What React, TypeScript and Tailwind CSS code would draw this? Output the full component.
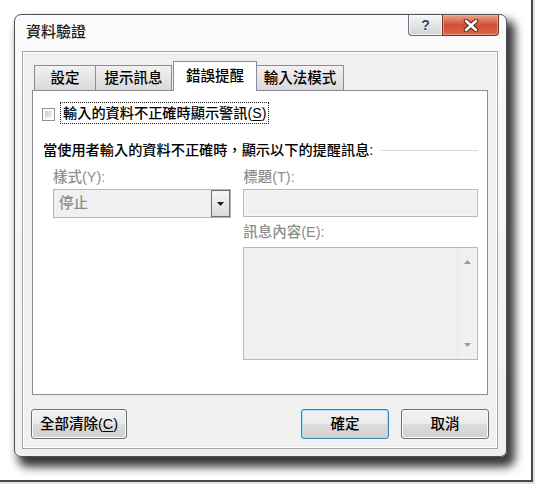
import React from 'react';

const font = "font-['Liberation_Sans','Noto_Sans_CJK_TC',sans-serif]";

function TitleButtons() {
  return (
    <div className="flex h-[21px]">
      <div className="w-[35px] h-full rounded-bl-[4px] border border-t-0 border-[#6c717b] bg-gradient-to-b from-[#f5f6f7] via-[#e3e5e8] to-[#cfd3d9] shadow-[inset_0_0_0_1px_rgba(255,255,255,0.7)] flex items-center justify-center">
        <span className="text-[14px] leading-none font-bold text-[#3d4350] [text-shadow:0_0_2px_#fff]">?</span>
      </div>
      <div className="-ml-px w-[57px] h-full rounded-br-[4px] border border-t-0 border-[#7b2f22] bg-gradient-to-b from-[#e9a38e] via-[#cf4f32] to-[#d9694b] shadow-[inset_0_0_0_1px_rgba(255,200,180,0.5)] flex items-center justify-center">
        <svg width="16" height="13" viewBox="0 0 16 13">
          <path d="M3 2 L13 11 M13 2 L3 11" stroke="#5a1d12" strokeWidth="4.5" strokeLinecap="round" />
          <path d="M3 2 L13 11 M13 2 L3 11" stroke="#ffffff" strokeWidth="2.6" strokeLinecap="round" />
        </svg>
      </div>
    </div>
  );
}

function Tab({ label, width, active, first }: { label: string; width: number; active?: boolean; first?: boolean }) {
  if (active) {
    return (
      <div
        className="relative z-10 -mb-px h-[30px] border border-b-0 border-[#898c95] bg-white flex items-center justify-center text-[14.5px] leading-none text-black"
        style={{ width }}
      >
        {label}
      </div>
    );
  }
  return (
    <div
      className={`h-[25px] border border-b-0 border-[#898c95] bg-gradient-to-b from-[#f2f2f2] to-[#d9d9d9] flex items-center justify-center text-[14.5px] leading-none text-black ${first ? '' : '-ml-px'}`}
      style={{ width }}
    >
      {label}
    </div>
  );
}

function WinButton({ children, width, primary }: { children: React.ReactNode; width: number; primary?: boolean }) {
  return (
    <div
      className={`h-[30px] rounded-[3px] border flex items-center justify-center text-[14.5px] leading-none text-black bg-[linear-gradient(#f2f2f2_0%,#ebebeb_50%,#dddddd_50%,#cfcfcf_100%)] ${
        primary
          ? 'border-[#3c7fb1] shadow-[inset_0_0_0_1px_#a8dcf7]'
          : 'border-[#707070] shadow-[inset_0_0_0_1px_#fbfbfb]'
      }`}
      style={{ width }}
    >
      {children}
    </div>
  );
}

export default function App() {
  return (
    <div className={`w-[535px] h-[484px] bg-[#e1e4d8] font-medium ${font}`}>
      <div className="w-[533px] h-[482px] bg-white border-r-2 border-b-2 border-[#474747] pt-[14px] pl-[14px]">
        {/* window */}
        <div className="w-[493px] h-[443px] rounded-[7px] border border-[#4f5257] bg-gradient-to-b from-[#fbfbfc] to-[#eef0f2] shadow-[6px_8px_10px_2px_rgba(0,0,0,0.78)] flex flex-col">
          {/* title bar */}
          <div className="h-[36px] flex items-start justify-between pr-[7px]">
            <div className="pl-[11px] h-full flex items-center text-[15px] leading-none text-[#1b1b1b] pb-[3px]">資料驗證</div>
            <TitleButtons />
          </div>

          {/* client area */}
          <div className="ml-[7px] w-[476px] h-[398px] border border-[#a1a6ad] bg-[#f0f0f0] shadow-[inset_0_0_0_1px_#ffffff] pt-[9px] px-[9px]">
            {/* tabs */}
            <div className="flex items-end pl-[2px]">
              <Tab label="設定" width={62} first />
              <Tab label="提示訊息" width={77} />
              <div className="w-px" />
              <Tab label="錯誤提醒" width={84} active />
              <Tab label="輸入法模式" width={88} />
            </div>

            {/* panel */}
            <div className="h-[305px] border border-[#898c95] bg-white pl-[9px] pr-[9px] pt-[11px]">
              <div className="flex items-center h-[22px]">
                <div className="w-[13px] h-[13px] border border-[#8f8f8f] bg-white p-[2px] mt-[2px]">
                  <div className="w-full h-full bg-gradient-to-br from-[#cfcfcf] to-[#f4f4f4]" />
                </div>
                <div className="ml-[5px] h-[22px] border border-dotted border-[#222] px-[2px] flex items-center text-[14.2px] leading-none text-black">
                  輸入的資料不正確時顯示警訊(<span className="underline underline-offset-2">S</span>)
                </div>
              </div>

              <div className="mt-[16px] h-[20px] flex items-center">
                <span className="ml-[1px] text-[14.2px] leading-none text-black whitespace-nowrap">
                  當使用者輸入的資料不正確時，顯示以下的提醒訊息:
                </span>
                <div className="flex-1 h-px bg-[#d5dde3] ml-[8px]" />
              </div>

              <div className="mt-[8px] flex gap-[12px]">
                <div className="ml-[11px] w-[179px]">
                  <div className="h-[18px] flex items-center text-[14.5px] leading-none text-[#8d8d8d]">樣式(Y):</div>
                  <div className="mt-[3px] h-[29px] border border-[#b1b5ba] bg-[#f0f0f0] flex items-stretch">
                    <div className="flex-1 flex items-center pl-[5px] text-[14.5px] leading-none text-[#8d8d8d]">停止</div>
                    <div className="w-[19px] border border-[#6f6f6f] bg-gradient-to-b from-[#f6f6f6] to-[#dcdcdc] flex items-center justify-center">
                      <svg width="7" height="4" viewBox="0 0 7 4">
                        <path d="M0 0 H7 L3.5 4 Z" fill="#1a1a1a" />
                      </svg>
                    </div>
                  </div>
                </div>

                <div className="w-[236px]">
                  <div className="h-[18px] flex items-center text-[14.5px] leading-none text-[#8d8d8d]">標題(T):</div>
                  <div className="mt-[3px] h-[28px] border border-[#b5b9be] bg-[#f0f0f0] shadow-[inset_0_0_0_1px_#f7f7f7]" />
                  <div className="mt-[6px] h-[18px] flex items-center text-[14.5px] leading-none text-[#8d8d8d]">訊息內容(E):</div>
                  <div className="mt-[6px] h-[113px] border border-[#b5b9be] bg-[#f0f0f0] flex justify-end">
                    <div className="w-[20px] border-l border-[#e6e6e6] bg-[#f0f0f0] flex flex-col items-center justify-between py-[12px]">
                      <svg width="7" height="4" viewBox="0 0 7 4">
                        <path d="M0 4 H7 L3.5 0 Z" fill="#9a9a9a" />
                      </svg>
                      <svg width="7" height="4" viewBox="0 0 7 4">
                        <path d="M0 0 H7 L3.5 4 Z" fill="#9a9a9a" />
                      </svg>
                    </div>
                  </div>
                </div>
              </div>
            </div>

            {/* buttons */}
            <div className="mt-[14px] -mx-[1px] flex items-center">
              <WinButton width={96}>
                全部清除(<span className="underline underline-offset-2">C</span>)
              </WinButton>
              <div className="flex-1" />
              <WinButton width={88} primary>確定</WinButton>
              <div className="w-[12px]" />
              <WinButton width={88}>取消</WinButton>
            </div>
          </div>
        </div>
      </div>
    </div>
  );
}
